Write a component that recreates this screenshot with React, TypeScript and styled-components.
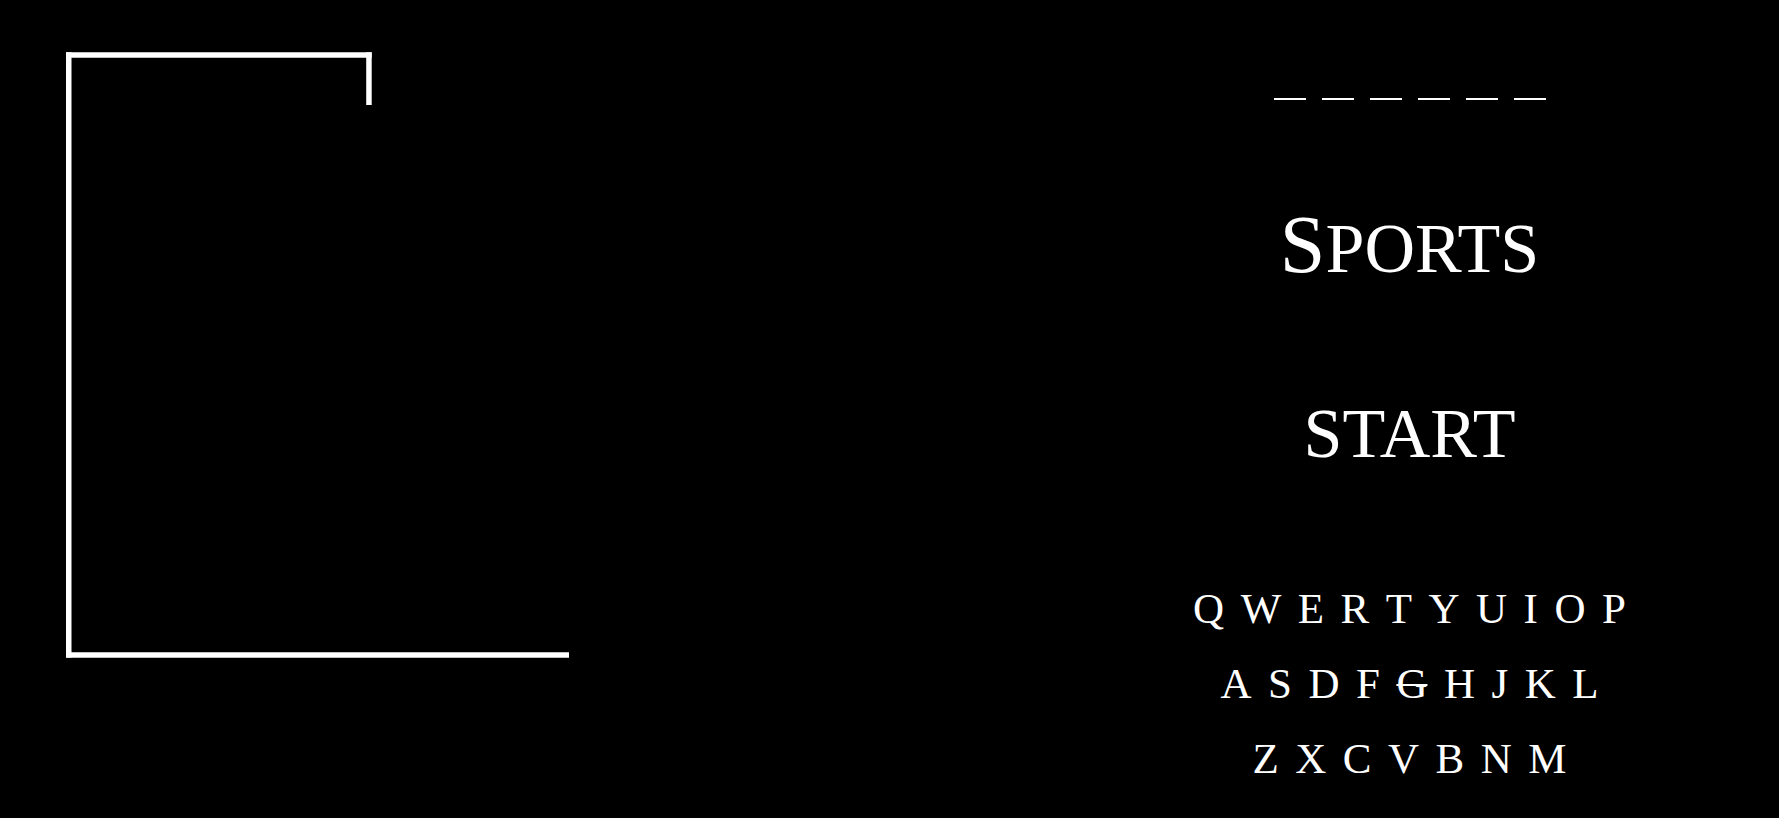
import React from "react";
import styled, { createGlobalStyle } from "styled-components";

const GlobalStyle = createGlobalStyle`
  html, body {
    margin: 0;
    padding: 0;
    background: #000;
    color: #fff;
    font-family: "Liberation Serif", "Times New Roman", serif;
  }
  #root { min-height: 818px; }
`;

const Page = styled.main`
  display: grid;
  grid-template-columns: 1040px 1fr;
  width: 1779px;
  height: 818px;
  background: #000;
  overflow: hidden;
`;

const GallowsPanel = styled.section`
  padding: 52px 0 0 66px;
`;

const GamePanel = styled.section`
  display: flex;
  flex-direction: column;
  align-items: center;
  padding-top: 98px;
`;

const WordRow = styled.div`
  display: flex;
  gap: 16px;
  height: 2px;
`;

const Blank = styled.span`
  display: block;
  width: 32px;
  height: 2px;
  background: #fff;
`;

const Category = styled.h1`
  margin: 105px 0 0;
  height: 84px;
  font-weight: 400;
  font-size: 82px;
  line-height: 80px;
  letter-spacing: 0;
  white-space: nowrap;
`;

const SmallCaps = styled.span`
  font-size: 70px;
`;

const StartButton = styled.button`
  margin: 110px 0 0;
  padding: 0;
  height: 70px;
  border: none;
  background: transparent;
  color: #fff;
  font-family: inherit;
  font-size: 70px;
  line-height: 70px;
  cursor: pointer;
`;

const Keyboard = styled.div`
  margin-top: 102px;
  display: flex;
  flex-direction: column;
  align-items: center;
`;

const KeyRow = styled.div`
  display: flex;
  justify-content: center;
  gap: 16.5px;
  height: 75px;
`;

const Key = styled.button<{ $used?: boolean }>`
  padding: 0;
  border: none;
  background: transparent;
  color: #fff;
  font-family: inherit;
  font-size: 43px;
  line-height: 75px;
  text-decoration: ${(p) => (p.$used ? "line-through" : "none")};
  text-decoration-thickness: 2px;
  cursor: pointer;
`;

const rows = ["QWERTYUIOP", "ASDFGHJKL", "ZXCVBNM"];
const used = new Set(["G"]);

function Gallows() {
  return (
    <svg width="505" height="610" viewBox="0 0 505 610" aria-label="gallows">
      <g stroke="#fff" strokeWidth="5.5" fill="none" strokeLinecap="butt">
        <line x1="2.75" y1="0.3" x2="2.75" y2="605.5" />
        <line x1="0" y1="3.05" x2="305.7" y2="3.05" />
        <line x1="302.95" y1="0.3" x2="302.95" y2="53" />
        <line x1="0" y1="603" x2="503" y2="603" />
      </g>
    </svg>
  );
}

export default function App() {
  return (
    <>
      <GlobalStyle />
      <Page>
        <GallowsPanel>
          <Gallows />
        </GallowsPanel>
        <GamePanel>
          <WordRow>
            {Array.from({ length: 6 }).map((_, i) => (
              <Blank key={i} />
            ))}
          </WordRow>
          <Category>
            S<SmallCaps>PORTS</SmallCaps>
          </Category>
          <StartButton>START</StartButton>
          <Keyboard>
            {rows.map((row) => (
              <KeyRow key={row}>
                {row.split("").map((ch) => (
                  <Key key={ch} $used={used.has(ch)}>
                    {ch}
                  </Key>
                ))}
              </KeyRow>
            ))}
          </Keyboard>
        </GamePanel>
      </Page>
    </>
  );
}
